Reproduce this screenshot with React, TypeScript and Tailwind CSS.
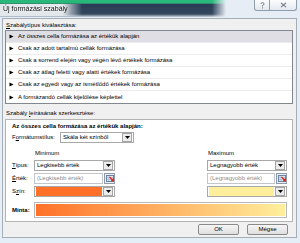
import React from "react";

function Arrow() {
  return (
    <svg width="5" height="5" viewBox="0 0 5 5" className="shrink-0">
      <path d="M0.5 0.5 L4.5 2.5 L0.5 4.5 Z" fill="#000" />
    </svg>
  );
}

function DropBtn() {
  return (
    <span className="w-[10px] h-[9px] mr-[0px] bg-[#ececec] border border-[#a5a5a5] flex items-center justify-center shrink-0">
      <svg width="5" height="3" viewBox="0 0 5 3">
        <path d="M0 0 H5 L2.5 3 Z" fill="#000" />
      </svg>
    </span>
  );
}

function Combo({ text }: { text: string }) {
  return (
    <div className="h-[11px] border border-[#a8a8a8] bg-white flex items-center pr-[1px]">
      <span className="flex-1 pl-[2px] whitespace-nowrap">{text}</span>
      <DropBtn />
    </div>
  );
}

function RangeBtn() {
  return (
    <span className="w-[11px] h-[11px] bg-[#e9eef4] border border-[#8e9aa8] flex items-center justify-center shrink-0">
      <svg width="8" height="7" viewBox="0 0 8 7">
        <rect x="0.5" y="0.5" width="7" height="6" fill="#dbe6f3" stroke="#6b84a6" strokeWidth="1" />
        <path d="M1 2.5 H7 M1 4.5 H7 M3 1 V6" stroke="#9fb3cc" strokeWidth="0.6" />
        <path d="M3.5 2 L7 5.5 M5 5.8 H7.2 V3.6" stroke="#e0251b" strokeWidth="1.3" fill="none" />
      </svg>
    </span>
  );
}

function ValueInput({ text }: { text: string }) {
  return (
    <div className="h-[11px] flex items-center gap-[1px]">
      <div className="flex-1 h-[11px] border border-[#c2c6cc] bg-white flex items-center pl-[2px] text-[#8a8a8a] whitespace-nowrap">
        {text}
      </div>
      <RangeBtn />
    </div>
  );
}

function ColorPick({ color }: { color: string }) {
  return (
    <div className="h-[11px] border border-[#a8a8a8] bg-white flex items-center pr-[1px]">
      <span className="flex-1 h-[9px] ml-[1px] mr-[1px]" style={{ background: color }} />
      <DropBtn />
    </div>
  );
}

const rules = [
  "Az összes cella formázása az értékük alapján",
  "Csak az adott tartalmú cellák formázása",
  "Csak a sorrend elején vagy végén lévő értékek formázása",
  "Csak az átlag feletti vagy alatti értékek formázása",
  "Csak az egyedi vagy az ismétlődő értékek formázása",
  "A formázandó cellák kijelölése képlettel",
];

export default function App() {
  return (
    <div className="w-[300px] h-[243px] overflow-hidden bg-[#e4eef7] font-['Liberation_Sans',Arial,sans-serif] text-[6px] leading-[7px] text-black">
      <div className="h-[240px] flex flex-col bg-[#e6edf4]">
        {/* title bar */}
        <div className="h-[18px] flex items-start shrink-0">
          <div className="w-[226px] h-[17px] [background:linear-gradient(to_right,#e2e7ec_0px,#e2e7ec_62px,rgba(226,231,236,0)_82px)_0_4px/100%_12px_no-repeat,linear-gradient(to_bottom,#27b878_0px,#2bb77a_3px,#2a3d55_4.5px,#33475d_14px,#c9d5e0_17px)] [mask-image:linear-gradient(to_right,#000_212px,transparent_226px)] pl-[3px] pt-[5px]">
            <span className="text-[7px] leading-[7px] text-[#111] [text-shadow:0_0_3px_#fff,0_0_5px_#fff]">
              Új formázási szabály
            </span>
          </div>
          <div className="flex-1" />
          <div className="flex mr-[3px]">
            <div className="w-[16px] h-[11px] border border-[#8f9cab] border-t-0 rounded-bl-[3px] bg-[linear-gradient(to_bottom,#fbfcfd,#e3e9ef)] flex items-center justify-center">
              <svg width="5" height="7" viewBox="0 0 5 7">
                <path d="M1 2 Q1 0.6 2.5 0.6 Q4 0.6 4 2 Q4 3 2.5 3.6 V4.6" stroke="#6c7886" strokeWidth="0.9" fill="none" />
                <rect x="2" y="5.4" width="1" height="1" fill="#6c7886" />
              </svg>
            </div>
            <div className="w-[27px] h-[11px] border border-[#8f9cab] border-t-0 border-l-0 rounded-br-[3px] bg-[linear-gradient(to_bottom,#fbfcfd,#e3e9ef)] flex items-center justify-center">
              <svg width="7" height="6" viewBox="0 0 7 6">
                <path d="M1 0.8 L6 5.2 M6 0.8 L1 5.2" stroke="#6c7886" strokeWidth="1.1" />
              </svg>
            </div>
          </div>
        </div>

        {/* client area */}
        <div className="ml-[2px] mr-[3px] h-[220px] border border-[#a3aeb9] bg-[#f0f0f0] pl-[2px] pr-[3px] pt-[3px] flex flex-col">
          <div className="pl-[1px] whitespace-nowrap">
            <span className="underline">S</span>zabálytípus kiválasztása:
          </div>
          <div className="mt-[1px] border border-[#828790] bg-white flex flex-col">
            {rules.map((r, i) => (
              <div
                key={r}
                className={
                  i === 0
                    ? "h-[12px] flex items-center gap-[4px] pl-[3px] bg-[#dedee4] border-b border-[#ececec]"
                    : "h-[12px] flex items-center gap-[4px] pl-[3px] border-b border-[#ececec] last:border-b-0"
                }
              >
                <Arrow />
                <span className="whitespace-nowrap">{r}</span>
              </div>
            ))}
          </div>

          <div className="mt-[6px] pl-[1px] whitespace-nowrap">
            Szabály <span className="underline">l</span>eírásának szerkesztése:
          </div>

          <div className="mt-[2px] h-[103px] border border-[#b4b4b4] bg-white pl-[6px] pr-[5px] pt-[3px] flex flex-col">
            <div className="font-bold whitespace-nowrap">Az összes cella formázása az értékük alapján:</div>

            <div className="mt-[2px] flex items-center">
              <span className="w-[48px] whitespace-nowrap">
                F<span className="underline">o</span>rmátumstílus:
              </span>
              <div className="w-[74px]">
                <Combo text="Skála két színből" />
              </div>
            </div>

            <div className="mt-[7px] grid grid-cols-[22px_81px_92px_80px]">
              <span />
              <span className="pl-[1px]">Minimum</span>
              <span />
              <span className="pl-[1px]">Maximum</span>
            </div>

            <div className="mt-[3px] grid grid-cols-[22px_81px_92px_80px] items-center">
              <span>
                <span className="underline">T</span>ípus:
              </span>
              <Combo text="Legkisebb érték" />
              <span />
              <Combo text="Legnagyobb érték" />
            </div>

            <div className="mt-[2px] grid grid-cols-[22px_81px_92px_80px] items-center">
              <span>
                <span className="underline">É</span>rték:
              </span>
              <ValueInput text="(Legkisebb érték)" />
              <span />
              <ValueInput text="(Legnagyobb érték)" />
            </div>

            <div className="mt-[2px] grid grid-cols-[22px_81px_92px_80px] items-center">
              <span>
                S<span className="underline">z</span>ín:
              </span>
              <ColorPick color="#ff7128" />
              <span />
              <ColorPick color="#ffef9c" />
            </div>

            <div className="mt-[5px] flex items-center">
              <span className="w-[22px] font-bold">Minta:</span>
              <div className="w-[254px] h-[16px] border border-[#b8b8b8] bg-white p-[1px]">
                <div className="w-full h-full bg-[linear-gradient(to_right,#ff7128,#ffef9c)]" />
              </div>
            </div>
          </div>

          <div className="mt-[2px] flex justify-end gap-[8px] pr-[5px]">
            <div className="w-[41px] h-[11px] border border-[#8a8a8a] rounded-[2px] bg-[linear-gradient(to_bottom,#f6f6f6,#dedede)] flex items-center justify-center">
              OK
            </div>
            <div className="w-[41px] h-[11px] border border-[#8a8a8a] rounded-[2px] bg-[linear-gradient(to_bottom,#f6f6f6,#dedede)] flex items-center justify-center">
              Mégse
            </div>
          </div>
        </div>
      </div>
    </div>
  );
}
